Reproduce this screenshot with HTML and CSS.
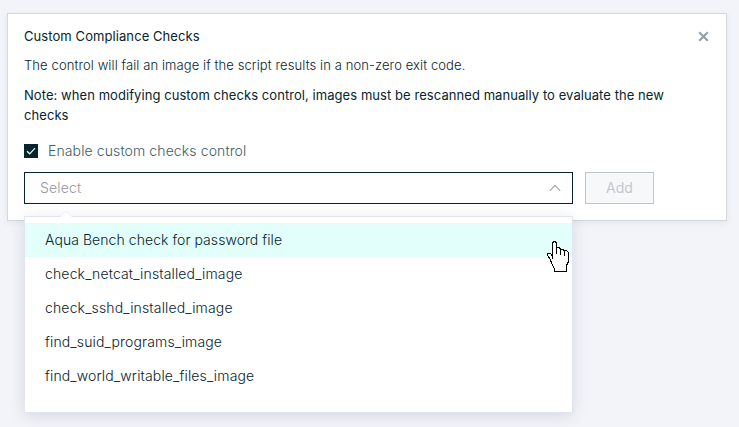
FILE: index.html
```
<!DOCTYPE html>
<html lang="en">
<head>
<meta charset="utf-8">
<title>Custom Compliance Checks</title>
<link rel="stylesheet" href="styles.css">
</head>
<body>
<section class="card">
  <header class="card-header">
    <h2 class="title">Custom Compliance Checks</h2>
    <button class="close" aria-label="Close"><svg width="11" height="11" viewBox="0 0 11 11"><path d="M1.2 1.2 9.8 9.8M9.8 1.2 1.2 9.8"/></svg></button>
  </header>
  <p class="description">The control will fail an image if the script results in a non-zero exit code.</p>
  <p class="note">Note: when modifying custom checks control, images must be rescanned manually to evaluate the new checks</p>
  <div class="enable">
    <span class="checkbox"><svg width="14" height="14" viewBox="0 0 14 14"><path d="M3 7.2 5.7 9.8 11 4.2"/></svg></span>
    <span class="enable-label">Enable custom checks control</span>
  </div>
  <div class="controls">
    <div class="select">
      <span class="placeholder">Select</span>
      <svg class="chevron" width="12" height="8" viewBox="0 0 12 8"><path d="M.8 6.8 6 1.4 11.2 6.8"/></svg>
      <div class="menu">
        <svg class="arrow" width="12" height="6" viewBox="0 0 12 6"><path class="arrow-fill" d="M0 6 6 0 12 6z"/><path class="arrow-line" d="M.5 5.5 6 .5 11.5 5.5"/></svg>
        <ul class="options">
          <li class="option active">Aqua Bench check for password file</li>
          <li class="option">check_netcat_installed_image</li>
          <li class="option">check_sshd_installed_image</li>
          <li class="option">find_suid_programs_image</li>
          <li class="option">find_world_writable_files_image</li>
        </ul>
      </div>
    </div>
    <button class="add">Add</button>
  </div>
</section>
<svg class="pointer" width="23" height="32" viewBox="0 0 23 32"><path d="M5.5 17.5V2.5L6.5 .5H8.5L9.5 2.5V12.5V6.5H12.5L13.5 8.5V13.5V8.5H16.5L17.5 10.5V14.5V9.5H19.5L21.5 11.5V20.5L19.5 24.5V30.5H7.5V27.5L4.5 22.5L3.5 18.5L.5 14.5V12.5H3.5L5.5 15.5"/></svg>
</body>
</html>
```
FILE: styles.css
```
* { box-sizing: border-box; }
body {
  margin: 0;
  padding: 13px 12px 0 7px;
  height: 427px;
  overflow: hidden;
  background: #f2f4f9;
  font-family: Inter, "Liberation Sans", sans-serif;
  font-size: 13px;
  color: #07242d;
}
.card {
  width: 720px;
  height: 208px;
  padding: 12px 16px 0;
  background: #fff;
  border: 1px solid #d5d8db;
  box-shadow: 0 2px 6px rgba(30, 40, 60, .07);
}
.card-header { display: flex; justify-content: space-between; height: 20px; }
.title { margin: 0; font-size: 13px; font-weight: 400; line-height: 21px; letter-spacing: .08px; }
.close { display: flex; margin: 5px 0 0; padding: 0; width: 12px; height: 11px; border: 0; background: none; }
.close path { fill: none; stroke: #98a1a9; stroke-width: 2.3; }
.description { margin: 9px 0 0; line-height: 20px; font-weight: 300; letter-spacing: .1px; }
.note { margin: 10px 0 0; line-height: 20px; letter-spacing: .065px; }
.enable { display: flex; align-items: center; gap: 10px; margin-top: 15px; height: 22px; }
.checkbox { display: flex; width: 14px; height: 14px; background: #07242d; }
.checkbox path { fill: none; stroke: #dffffb; stroke-width: 1.2; }
.enable-label { margin-top: -2px; font-size: 14px; font-weight: 300; letter-spacing: .11px; color: #405a68; }
.controls { display: flex; gap: 12px; margin-top: 10px; }
.select {
  position: relative;
  display: flex;
  align-items: center;
  justify-content: space-between;
  width: 549px;
  height: 32px;
  padding: 0 11px 0 15px;
  border: 1px solid #07242d;
}
.placeholder { margin-top: -2px; font-size: 14px; letter-spacing: .15px; color: #9197a0; font-weight: 300; }
.chevron path { fill: none; stroke: #a0a4ac; stroke-width: 1.1; }
.menu {
  position: absolute;
  z-index: 2;
  top: 43px;
  left: -1px;
  width: 549px;
  height: 197px;
  padding-top: 6px;
  background: #fff;
  border: 1px solid #e3e5ee;
  box-shadow: 0 3px 14px rgba(30, 35, 60, .13);
}
.arrow { position: absolute; top: -6px; left: 35px; }
.arrow-fill { fill: #fff; }
.arrow-line { fill: none; stroke: #eceef3; }
.options { margin: 0; padding: 0; list-style: none; }
.option { height: 34px; padding-left: 20px; font-size: 14px; line-height: 34px; font-weight: 300; letter-spacing: .15px; }
.active { background: #e2fffc; letter-spacing: .06px; }
.add {
  width: 69px;
  height: 32px;
  padding: 0 0 1px;
  border: 1px solid #bfc4ca;
  background: #f7f8fa;
  color: #c3c7ce;
  font: 400 14px Inter, "Liberation Sans", sans-serif;
}
.pointer { position: absolute; z-index: 3; left: 547px; top: 241px; }
.pointer path { fill: #fff; stroke: #000; stroke-width: 1; shape-rendering: crispEdges; }
```
